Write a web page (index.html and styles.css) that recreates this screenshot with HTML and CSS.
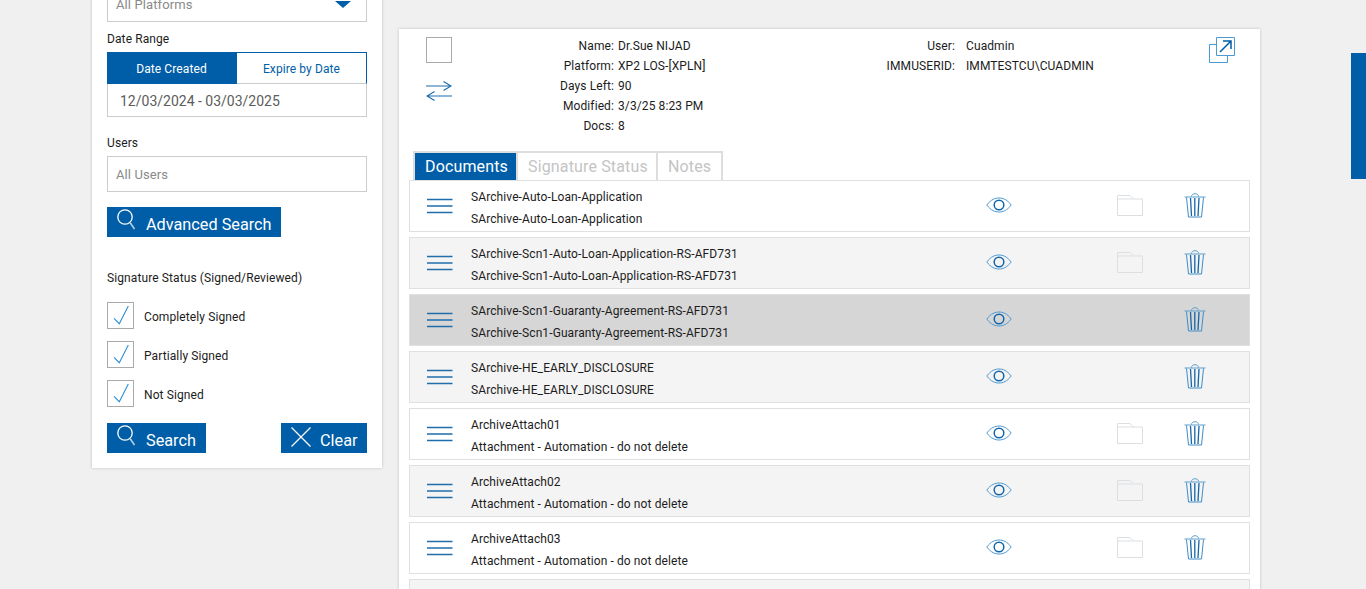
FILE: index.html
```html
<!DOCTYPE html>
<html lang="en">
<head>
  <meta charset="UTF-8">
  <meta name="viewport" content="width=device-width, initial-scale=1.0">
  <title>Documents</title>
  <link rel="stylesheet" href="styles.css">
</head>
<body>

  <!-- Icons -->
  <svg class="icon-defs" width="0" height="0">
    <symbol id="i-search" viewBox="0 0 20 24">
      <circle cx="8" cy="8" r="7.200" fill="none" stroke="#fff" stroke-width="1.300"/>
      <path d="M13 13.500 L17.500 20" fill="none" stroke="#b9d3e8" stroke-width="1.500"/>
    </symbol>
    <symbol id="i-check" viewBox="0 0 25 25">
      <path d="M6 15.300 L11.300 20.700 L20.300 3" fill="none" stroke="#2f8fd8" stroke-width="1.100"/>
    </symbol>
    <symbol id="i-menu" viewBox="0 0 26 16">
      <path d="M0 1.500 H25.500 M0 8 H25.500 M0 14.500 H25.500" fill="none" stroke="#1f6dab" stroke-width="1.400"/>
    </symbol>
    <symbol id="i-eye" viewBox="0 0 26 16">
      <path d="M0.800 8 C5 2.500 9 1 13 1 C17 1 21 2.500 25.200 8 C21 13.500 17 15 13 15 C9 15 5 13.500 0.800 8 Z" fill="none" stroke="#4d9ad2" stroke-width="1"/>
      <circle cx="13" cy="8" r="4.800" fill="none" stroke="#1566a8" stroke-width="1.500"/>
    </symbol>
    <symbol id="i-folder" viewBox="0 0 26 21">
      <path d="M0.500 20.500 V0.500 H13 L16.500 4 H25.500 V20.500 Z M0.500 4 H16.500" fill="none" stroke="#dcdfe2" stroke-width="1"/>
    </symbol>
    <symbol id="i-trash" viewBox="0 0 22 26">
      <path d="M0.500 5 H21.500 M7.500 4.500 C7.500 0.800 14.500 0.800 14.500 4.500" fill="none" stroke="#5a9dcc" stroke-width="1"/>
      <path d="M2.500 5.500 L4.500 25 H17.500 L19.500 5.500" fill="none" stroke="#3f8dc6" stroke-width="1"/>
      <path d="M6.500 6 L7.500 24 M10.800 6 V24 M15 6 L14 24" fill="none" stroke="#1566a8" stroke-width="1.300"/>
    </symbol>
  </svg>

  <div class="page">

    <!-- Left filter panel -->
    <div class="filters">
      <div class="select-box">
        <span>All Platforms</span>
        <span class="caret"></span>
      </div>

      <div class="field-label">Date Range</div>
      <div class="date-tabs">
        <div class="date-tab active">Date Created</div>
        <div class="date-tab">Expire by Date</div>
      </div>
      <div class="date-input">12/03/2024 - 03/03/2025</div>

      <div class="field-label users-label">Users</div>
      <div class="text-input">All Users</div>

      <button class="btn btn-advanced">
        <svg class="btn-icon"><use href="#i-search"/></svg>Advanced Search
      </button>

      <div class="field-label status-label">Signature Status (Signed/Reviewed)</div>
      <div class="check-row">
        <span class="check-box"><svg><use href="#i-check"/></svg></span><span class="check-text">Completely Signed</span>
      </div>
      <div class="check-row">
        <span class="check-box"><svg><use href="#i-check"/></svg></span><span class="check-text">Partially Signed</span>
      </div>
      <div class="check-row">
        <span class="check-box"><svg><use href="#i-check"/></svg></span><span class="check-text">Not Signed</span>
      </div>

      <div class="filter-actions">
        <button class="btn btn-search">
          <svg class="btn-icon"><use href="#i-search"/></svg>Search
        </button>
        <button class="btn btn-clear">
          <svg class="clear-icon" viewBox="0 0 20 20"><path d="M0.500 0.500 L19.500 19.500 M19.500 0.500 L0.500 19.500" fill="none" stroke="#fff" stroke-width="1.200"/></svg>Clear
        </button>
      </div>
    </div>

    <!-- Main panel -->
    <div class="package">
      <div class="package-head">
        <div class="head-tools">
          <span class="select-all"></span>
          <svg class="swap-icon" viewBox="0 0 26 20">
            <path d="M0 5 H25 M17.500 0.500 L25 5 L17.500 9.500 M26 15 H1 M8.500 10.500 L1 15 L8.500 19.500" fill="none" stroke="#1f6dab" stroke-width="1.200"/>
          </svg>
        </div>
        <div class="info info-package">
          <span class="info-key">Name:</span><span>Dr.Sue NIJAD</span>
          <span class="info-key">Platform:</span><span>XP2 LOS-[XPLN]</span>
          <span class="info-key">Days Left:</span><span>90</span>
          <span class="info-key">Modified:</span><span>3/3/25 8:23 PM</span>
          <span class="info-key">Docs:</span><span>8</span>
        </div>
        <div class="info info-user">
          <span class="info-key">User:</span><span>Cuadmin</span>
          <span class="info-key">IMMUSERID:</span><span>IMMTESTCU\CUADMIN</span>
        </div>
        <svg class="popout-icon" viewBox="0 0 26 26">
          <path d="M7.500 0.500 H25.500 V18.500 H7.500 Z" fill="#fff" stroke="#4d9ad2" stroke-width="1"/>
          <path d="M7.500 7.500 H0.500 V25.500 H18.500 V18.500" fill="none" stroke="#4d9ad2" stroke-width="1"/>
          <path d="M11 15 L22 4 M14 4 H22 V12" fill="none" stroke="#005ea8" stroke-width="1.500"/>
        </svg>
      </div>

      <div class="tabs">
        <div class="tab tab-documents active">Documents</div>
        <div class="tab tab-status">Signature Status</div>
        <div class="tab tab-notes">Notes</div>
      </div>

      <div class="doc-list">
        <div class="doc-row">
          <svg class="ico-menu"><use href="#i-menu"/></svg>
          <div class="doc-text"><div>SArchive-Auto-Loan-Application</div><div>SArchive-Auto-Loan-Application</div></div>
          <svg class="ico-eye"><use href="#i-eye"/></svg>
          <svg class="ico-folder"><use href="#i-folder"/></svg>
          <svg class="ico-trash"><use href="#i-trash"/></svg>
        </div>
        <div class="doc-row alt">
          <svg class="ico-menu"><use href="#i-menu"/></svg>
          <div class="doc-text"><div>SArchive-Scn1-Auto-Loan-Application-RS-AFD731</div><div>SArchive-Scn1-Auto-Loan-Application-RS-AFD731</div></div>
          <svg class="ico-eye"><use href="#i-eye"/></svg>
          <svg class="ico-folder"><use href="#i-folder"/></svg>
          <svg class="ico-trash"><use href="#i-trash"/></svg>
        </div>
        <div class="doc-row selected">
          <svg class="ico-menu"><use href="#i-menu"/></svg>
          <div class="doc-text"><div>SArchive-Scn1-Guaranty-Agreement-RS-AFD731</div><div>SArchive-Scn1-Guaranty-Agreement-RS-AFD731</div></div>
          <svg class="ico-eye"><use href="#i-eye"/></svg>
          <span class="ico-folder"></span>
          <svg class="ico-trash"><use href="#i-trash"/></svg>
        </div>
        <div class="doc-row alt">
          <svg class="ico-menu"><use href="#i-menu"/></svg>
          <div class="doc-text"><div>SArchive-HE_EARLY_DISCLOSURE</div><div>SArchive-HE_EARLY_DISCLOSURE</div></div>
          <svg class="ico-eye"><use href="#i-eye"/></svg>
          <span class="ico-folder"></span>
          <svg class="ico-trash"><use href="#i-trash"/></svg>
        </div>
        <div class="doc-row">
          <svg class="ico-menu"><use href="#i-menu"/></svg>
          <div class="doc-text"><div>ArchiveAttach01</div><div>Attachment - Automation - do not delete</div></div>
          <svg class="ico-eye"><use href="#i-eye"/></svg>
          <svg class="ico-folder"><use href="#i-folder"/></svg>
          <svg class="ico-trash"><use href="#i-trash"/></svg>
        </div>
        <div class="doc-row alt">
          <svg class="ico-menu"><use href="#i-menu"/></svg>
          <div class="doc-text"><div>ArchiveAttach02</div><div>Attachment - Automation - do not delete</div></div>
          <svg class="ico-eye"><use href="#i-eye"/></svg>
          <svg class="ico-folder"><use href="#i-folder"/></svg>
          <svg class="ico-trash"><use href="#i-trash"/></svg>
        </div>
        <div class="doc-row">
          <svg class="ico-menu"><use href="#i-menu"/></svg>
          <div class="doc-text"><div>ArchiveAttach03</div><div>Attachment - Automation - do not delete</div></div>
          <svg class="ico-eye"><use href="#i-eye"/></svg>
          <svg class="ico-folder"><use href="#i-folder"/></svg>
          <svg class="ico-trash"><use href="#i-trash"/></svg>
        </div>
        <div class="doc-row alt"></div>
      </div>
    </div>

  </div>

  <!-- Side handle -->
  <div class="side-handle"></div>

</body>
</html>
```

FILE: styles.css
```css
* {
  margin: 0;
  padding: 0;
  box-sizing: border-box;
}

html,
body {
  height: 100%;
  overflow: hidden;
}

body {
  background-color: #f0f0f0;
  font-family: Roboto, Arial, sans-serif;
  font-size: 12px;
  letter-spacing: 0.1px;
  color: #1c1c1c;
}

.icon-defs {
  display: block;
}

.page {
  display: flex;
  align-items: flex-start;
  padding-left: 92px;
}

/* Left filter panel */
.filters {
  width: 290px;
  margin-top: -13px;
  margin-right: 17px;
  padding: 0 15px 15px;
  background-color: #fff;
  box-shadow: 0 0 3px rgba(0, 0, 0, 0.2);
}

.select-box {
  display: flex;
  justify-content: space-between;
  align-items: center;
  height: 35px;
  padding: 0 15px 0 8px;
  border: 1px solid #ccc;
  font-size: 13px;
  color: #8a8a8a;
}

.caret {
  border-left: 8px solid transparent;
  border-right: 8px solid transparent;
  border-top: 7px solid #005ea8;
}

.field-label {
  margin-top: 10px;
  height: 14px;
  line-height: 14px;
  font-size: 12px;
}

.date-tabs {
  display: flex;
  margin-top: 6px;
  height: 32px;
}

.date-tab {
  flex: 1;
  line-height: 33px;
  text-align: center;
  font-size: 12px;
  color: #005ea8;
  border-top: 1px solid #005ea8;
  border-right: 1px solid #005ea8;
  border-bottom: 1px solid #ccc;
}

.date-tab.active {
  background-color: #005ea8;
  color: #fff;
  border-bottom-color: #005ea8;
}

.date-input {
  height: 33px;
  padding-left: 12px;
  line-height: 35px;
  font-size: 14px;
  letter-spacing: 0;
  color: #5c5c5c;
  border: 1px solid #ccc;
  border-top: none;
}

.users-label {
  margin-top: 19px;
}

.text-input {
  height: 36px;
  margin-top: 6px;
  padding-left: 8px;
  line-height: 36px;
  font-size: 13px;
  color: #8a8a8a;
  border: 1px solid #ccc;
}

.btn {
  display: flex;
  align-items: center;
  height: 30px;
  border: none;
  background-color: #005ea8;
  color: #fff;
  font-family: Roboto, Arial, sans-serif;
  font-size: 16.250px;
  font-weight: 400;
  letter-spacing: 0;
  white-space: nowrap;
  padding-top: 4px;
}

.btn-icon {
  flex-shrink: 0;
  width: 20px;
  height: 24px;
  margin: -6px 9px 0 10px;
}

.btn-advanced {
  width: 174px;
  margin-top: 15px;
}

.status-label {
  margin-top: 34px;
}

.check-row {
  display: flex;
  align-items: center;
  height: 27px;
  margin-top: 12px;
  font-size: 12px;
}

.status-label + .check-row {
  margin-top: 17px;
}

.check-text {
  padding-top: 3px;
}

.check-box {
  display: block;
  width: 27px;
  height: 27px;
  margin-right: 10px;
  border: 1px solid #aaa;
}

.check-box svg {
  display: block;
  width: 25px;
  height: 25px;
}

.filter-actions {
  display: flex;
  justify-content: space-between;
  margin-top: 16px;
}

.btn-search {
  width: 99px;
}

.btn-clear {
  width: 86px;
}

.clear-icon {
  flex-shrink: 0;
  width: 20px;
  height: 20px;
  margin: -6px 9px 0 10px;
}

/* Main panel */
.package {
  width: 861px;
  margin-top: 29px;
  padding: 0 10px;
  background-color: #fff;
  box-shadow: 0 0 3px rgba(0, 0, 0, 0.2);
}

.package-head {
  display: flex;
  height: 122px;
  padding-top: 8px;
}

.head-tools {
  width: 43px;
  margin-left: 17px;
}

.select-all {
  display: block;
  width: 26px;
  height: 26px;
  border: 1px solid #aaa;
}

.swap-icon {
  display: block;
  width: 26px;
  height: 20px;
  margin-top: 18px;
}

.info {
  display: grid;
  grid-auto-rows: 20px;
  column-gap: 4px;
  margin-top: -1px;
  line-height: 20px;
  font-size: 12px;
  align-content: start;
}

.info-key {
  text-align: right;
}

.info-package {
  width: 345px;
  margin-left: 40px;
  grid-template-columns: 105px 1fr;
}

.info-user {
  width: 207px;
  margin-left: 27px;
  grid-template-columns: 74px 1fr;
  column-gap: 11px;
}

.popout-icon {
  width: 26px;
  height: 26px;
  margin-left: 121px;
}

.tabs {
  display: flex;
  height: 29px;
  margin-left: 4px;
}

.tab {
  line-height: 27px;
  font-size: 16px;
  letter-spacing: 0.150px;
  color: #c4c4c4;
  border: 2px solid #ddd;
  border-bottom: none;
}

.tab.active {
  background-color: #005ea8;
  color: #fff;
}

.tab-documents {
  width: 103px;
  padding-left: 10px;
  border-right: none;
}

.tab-status {
  width: 142px;
  padding-left: 10px;
}

.tab-notes {
  width: 65px;
  padding-left: 10px;
  border-left: none;
}

/* Document rows */
.doc-list {
  display: flex;
  flex-direction: column;
  gap: 5px;
}

.doc-row {
  display: flex;
  align-items: center;
  flex-shrink: 0;
  height: 52px;
  background-color: #fff;
  border: 1px solid #e0e0e0;
}

.doc-row.alt {
  background-color: #f4f4f4;
}

.doc-row.selected {
  background-color: #d6d6d6;
}

.ico-menu {
  width: 26px;
  height: 16px;
  margin-left: 17px;
}

.doc-text {
  width: 515px;
  margin-top: 4px;
  margin-left: 18px;
  line-height: 22px;
  font-size: 12px;
}

.ico-eye {
  width: 26px;
  height: 16px;
  margin-top: -2px;
}

.ico-folder {
  display: block;
  width: 26px;
  height: 21px;
  margin-left: 105px;
  margin-top: -1px;
}

.ico-trash {
  width: 22px;
  height: 26px;
  margin-left: 41px;
  margin-top: -2px;
}

/* Side handle */
.side-handle {
  position: fixed;
  top: 53px;
  right: 0;
  width: 15px;
  height: 126px;
  background-color: #005ea8;
}
```
